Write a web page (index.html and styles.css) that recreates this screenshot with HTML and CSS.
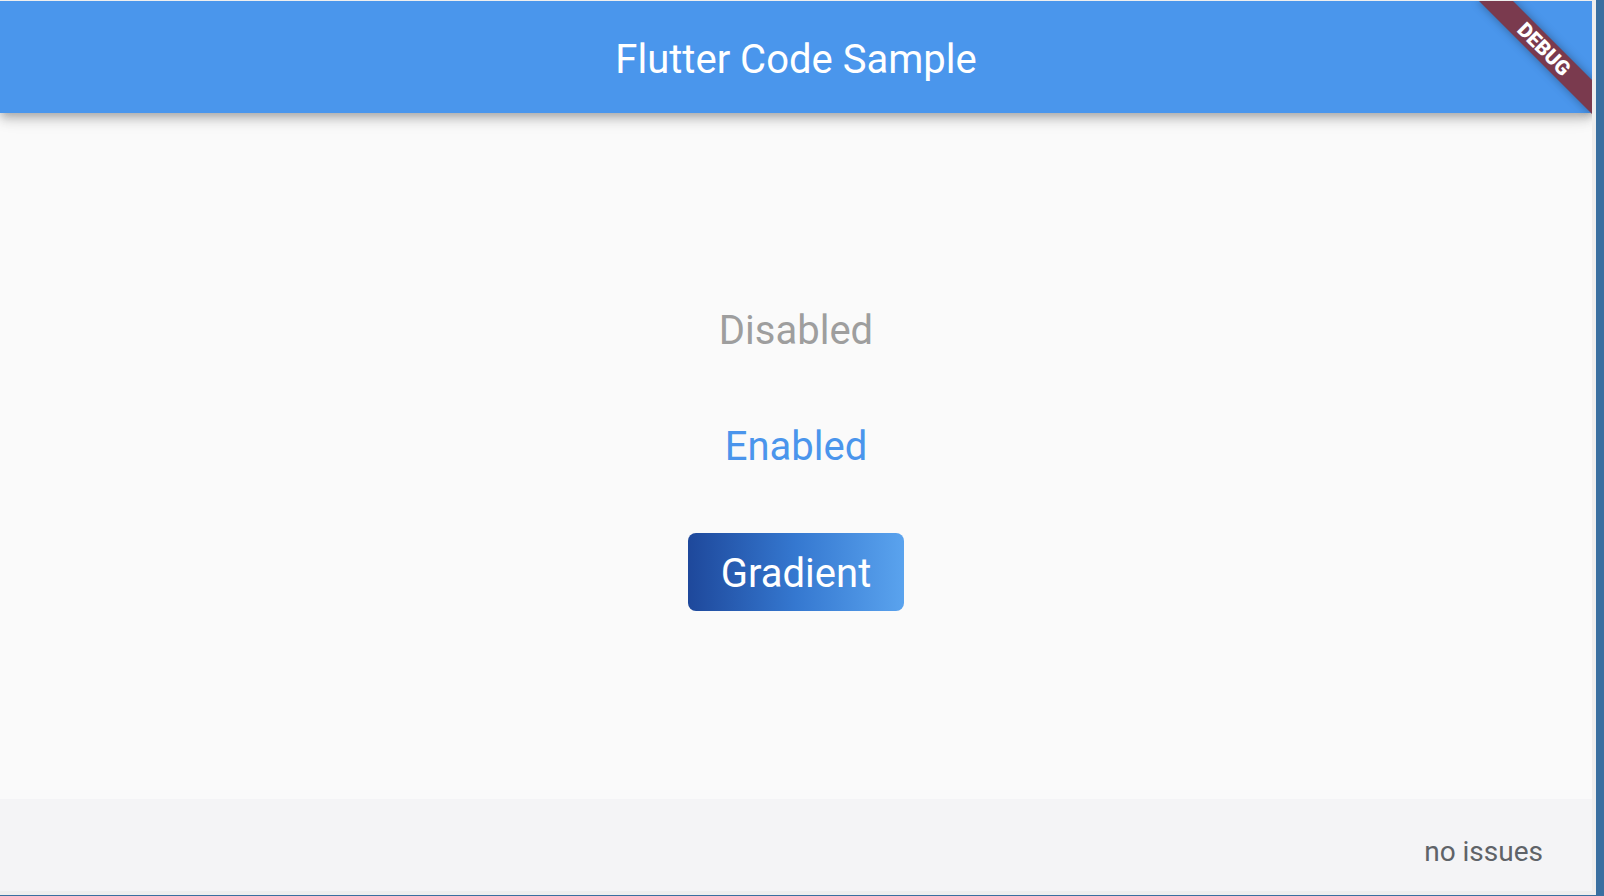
FILE: index.html
```html
<!DOCTYPE html>
<html>
<head>
<meta charset="utf-8">
<link rel="stylesheet" href="styles.css">
</head>
<body>
<div class="frame">
  <div class="app">
    <header class="appbar">
      <span class="title">Flutter Code Sample</span>
    </header>
    <main class="content">
      <div class="btn btn-disabled">Disabled</div>
      <div class="btn btn-enabled">Enabled</div>
      <div class="btn btn-gradient">Gradient</div>
    </main>
    <div class="banner">DEBUG</div>
  </div>
  <footer class="status">
    <span class="status-text">no issues</span>
  </footer>
</div>
</body>
</html>
```

FILE: styles.css
```css
html, body {
  margin: 0;
  padding: 0;
}

body {
  width: 1604px;
  height: 896px;
  background: #3a6fa0;
  font-family: Roboto, "Noto Sans", "Liberation Sans", sans-serif;
  overflow: hidden;
}

.frame {
  width: 1596px;
  height: 895px;
  box-sizing: border-box;
  padding: 1px 4px 4px 0;
  background: #eeeeee;
  display: flex;
  flex-direction: column;
}

.app {
  position: relative;
  width: 1592px;
  height: 798px;
  background: #fafafa;
  overflow: hidden;
  display: flex;
  flex-direction: column;
}

.appbar {
  position: relative;
  z-index: 1;
  height: 112px;
  flex: 0 0 112px;
  box-sizing: border-box;
  padding-top: 7px;
  background: #4a96ec;
  display: flex;
  align-items: center;
  justify-content: center;
  box-shadow: 0 4px 8px -2px rgba(0, 0, 0, 0.2),
              0 8px 10px 0 rgba(0, 0, 0, 0.12),
              0 2px 20px 0 rgba(0, 0, 0, 0.10);
}

.title {
  color: #ffffff;
  font-size: 40px;
  font-weight: 400;
  line-height: 46.875px;
}

.content {
  flex: 1 1 auto;
  display: flex;
  flex-direction: column;
  align-items: center;
  justify-content: flex-start;
  padding-top: 195px;
}

.btn {
  font-size: 40px;
  line-height: 46.875px;
  white-space: nowrap;
}

.btn-disabled {
  color: #9e9e9e;
}

.btn-enabled {
  color: #4a95ec;
  margin-top: 69px;
}

.btn-gradient {
  margin-top: 62px;
  color: #ffffff;
  padding: 18px 33px 13px 33px;
  border-radius: 8px;
  background: linear-gradient(90deg, #1e489b 0%, #3578d0 50%, #5aa3ee 100%);
}

.banner {
  position: absolute;
  z-index: 2;
  top: 36px;
  right: -32px;
  width: 160px;
  height: 24px;
  transform: rotate(45deg);
  background: #7a3a4e;
  box-shadow: 0 0 10px rgba(0, 0, 0, 0.35);
  color: #ffffff;
  font-size: 20.4px;
  font-weight: 900;
  line-height: 24px;
  text-align: center;
}

.status {
  height: 92px;
  flex: 0 0 92px;
  width: 1592px;
  box-sizing: border-box;
  padding: 36px 49px 0 0;
  background: #f4f4f6;
  display: flex;
  justify-content: flex-end;
  align-items: flex-start;
}

.status-text {
  color: #5f6368;
  font-size: 28px;
  line-height: 33px;
}
```
